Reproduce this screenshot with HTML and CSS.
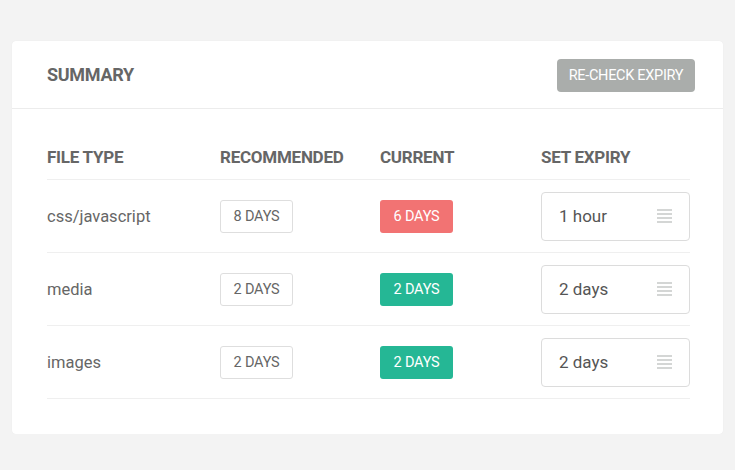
FILE: index.html
```html
<!DOCTYPE html>
<html>
<head>
<meta charset="utf-8">
<link rel="stylesheet" href="styles.css">
</head>
<body>
<div class="card">
  <div class="card-header">
    <h2 class="title">SUMMARY</h2>
    <button class="btn">RE-CHECK EXPIRY</button>
  </div>
  <div class="card-body">
    <div class="table">
      <div class="row head">
        <div>FILE TYPE</div>
        <div>RECOMMENDED</div>
        <div>CURRENT</div>
        <div>SET EXPIRY</div>
      </div>
      <div class="row">
        <div class="name">css/javascript</div>
        <div><span class="badge outline">8 DAYS</span></div>
        <div><span class="badge red">6 DAYS</span></div>
        <div><div class="select"><span>1 hour</span><span class="icon"><i></i><i></i><i></i><i></i></span></div></div>
      </div>
      <div class="row">
        <div class="name">media</div>
        <div><span class="badge outline">2 DAYS</span></div>
        <div><span class="badge green">2 DAYS</span></div>
        <div><div class="select"><span>2 days</span><span class="icon"><i></i><i></i><i></i><i></i></span></div></div>
      </div>
      <div class="row">
        <div class="name">images</div>
        <div><span class="badge outline">2 DAYS</span></div>
        <div><span class="badge green">2 DAYS</span></div>
        <div><div class="select"><span>2 days</span><span class="icon"><i></i><i></i><i></i><i></i></span></div></div>
      </div>
    </div>
  </div>
</div>
</body>
</html>
```

FILE: styles.css
```css
html, body {
  margin: 0;
  padding: 0;
  background: #f3f3f3;
  font-family: Roboto, "Liberation Sans", sans-serif;
  color: #666;
}
body {
  padding: 41px 12px 0 12px;
}
.card {
  background: #fff;
  border-radius: 4px;
  box-shadow: 0 0 1px rgba(0,0,0,0.08);
  height: 393px;
  box-sizing: border-box;
}
.card-header {
  height: 68px;
  box-sizing: border-box;
  border-bottom: 1px solid #ececec;
  display: flex;
  align-items: center;
  justify-content: space-between;
  padding: 0 28px 0 35px;
}
.title {
  margin: 0;
  font-size: 18px;
  font-weight: 700;
  color: #666;
  letter-spacing: -0.3px;
}
.btn {
  border: none;
  background: #aaadab;
  color: #fff;
  font-family: Roboto, "Liberation Sans", sans-serif;
  font-size: 14.5px;
  letter-spacing: -0.3px;
  height: 33px;
  width: 138px;
  border-radius: 4px;
  margin-top: 1px;
  padding: 0;
  white-space: nowrap;
}
.card-body {
  padding: 30px 33px 0 35px;
}
.row {
  display: grid;
  grid-template-columns: 173px 160px 161px 1fr;
  align-items: center;
  border-bottom: 1px solid #efefef;
  height: 73px;
  box-sizing: border-box;
}
.row.head {
  height: 41px;
  padding: 9px 0 13px;
  font-size: 17px;
  font-weight: 700;
  line-height: 18px;
  letter-spacing: -0.25px;
  color: #666;
}
.name {
  font-size: 16.5px;
  color: #666;
}
.badge {
  display: inline-flex;
  align-items: center;
  justify-content: center;
  height: 33px;
  width: 73px;
  box-sizing: border-box;
  padding: 0;
  border-radius: 3px;
  font-size: 14.5px;
  letter-spacing: -0.2px;
  white-space: nowrap;
}
.badge.outline {
  border: 1px solid #dedede;
  color: #666;
}
.badge.red {
  background: #f27373;
  color: #fff;
}
.badge.green {
  background: #25b795;
  color: #fff;
}
.select {
  width: 149px;
  height: 49px;
  box-sizing: border-box;
  border: 1px solid #dcdcdc;
  border-radius: 4px;
  display: flex;
  align-items: center;
  justify-content: space-between;
  padding: 0 17px 0 17px;
  font-size: 17px;
  color: #555;
}
.icon {
  display: flex;
  flex-direction: column;
  gap: 2px;
  width: 15px;
}
.icon i {
  display: block;
  height: 2px;
  background: #d4d6d5;
}
```
